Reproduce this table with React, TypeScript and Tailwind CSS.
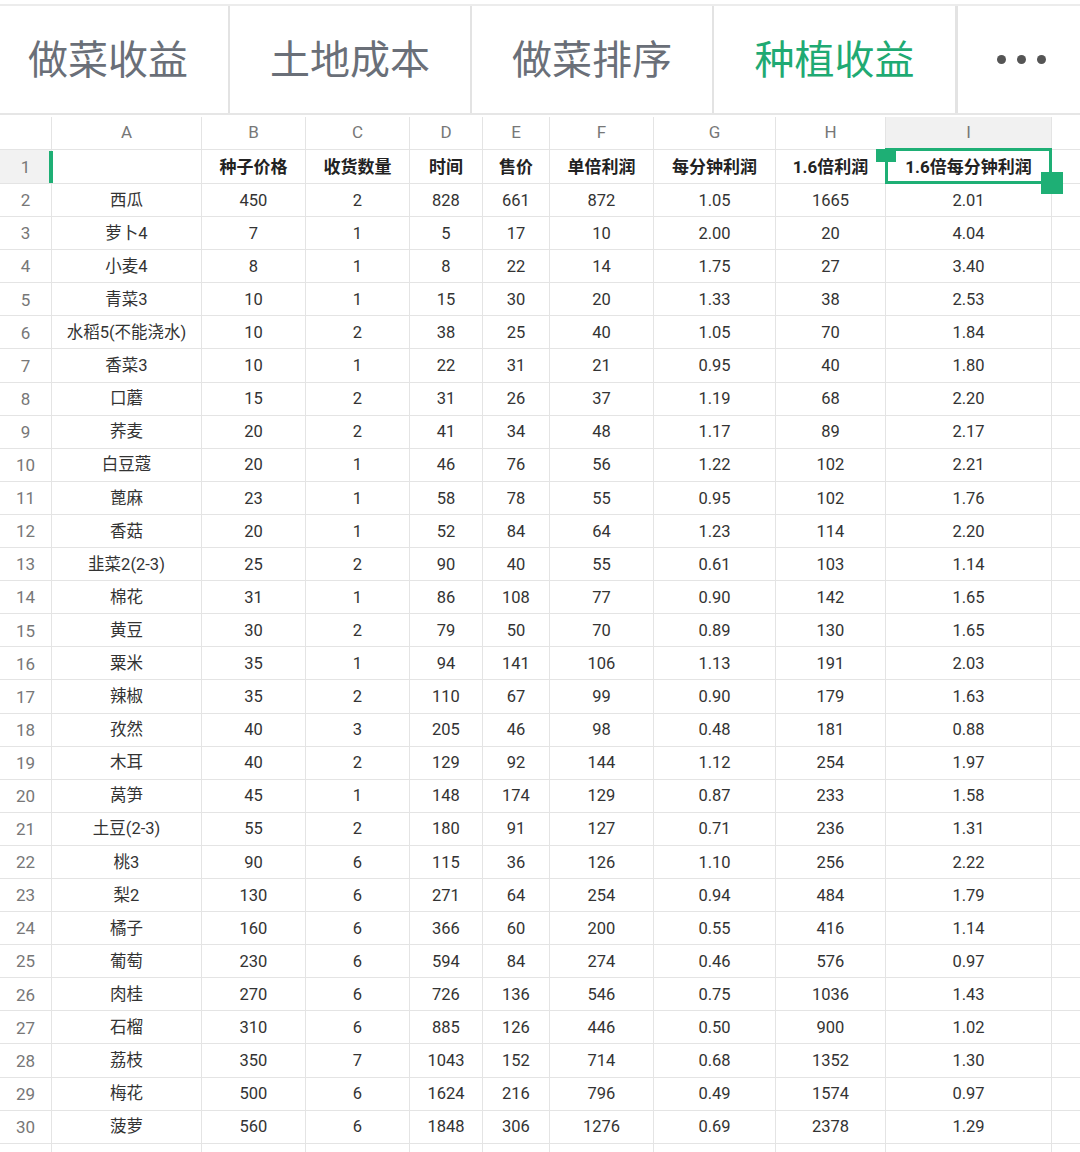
const tabs = ["做菜收益", "土地成本", "做菜排序", "种植收益"];

const columns = [
  { key: "A", width: "w-[150px]" },
  { key: "B", width: "w-[104px]" },
  { key: "C", width: "w-[104px]" },
  { key: "D", width: "w-[73px]" },
  { key: "E", width: "w-[67px]" },
  { key: "F", width: "w-[104px]" },
  { key: "G", width: "w-[122px]" },
  { key: "H", width: "w-[110px]" },
  { key: "I", width: "w-[166px]" },
];

const headers = ["", "种子价格", "收货数量", "时间", "售价", "单倍利润", "每分钟利润", "1.6倍利润", "1.6倍每分钟利润"];

const rows: string[][] = [
  ["西瓜", "450", "2", "828", "661", "872", "1.05", "1665", "2.01"],
  ["萝卜4", "7", "1", "5", "17", "10", "2.00", "20", "4.04"],
  ["小麦4", "8", "1", "8", "22", "14", "1.75", "27", "3.40"],
  ["青菜3", "10", "1", "15", "30", "20", "1.33", "38", "2.53"],
  ["水稻5(不能浇水)", "10", "2", "38", "25", "40", "1.05", "70", "1.84"],
  ["香菜3", "10", "1", "22", "31", "21", "0.95", "40", "1.80"],
  ["口蘑", "15", "2", "31", "26", "37", "1.19", "68", "2.20"],
  ["荞麦", "20", "2", "41", "34", "48", "1.17", "89", "2.17"],
  ["白豆蔻", "20", "1", "46", "76", "56", "1.22", "102", "2.21"],
  ["蓖麻", "23", "1", "58", "78", "55", "0.95", "102", "1.76"],
  ["香菇", "20", "1", "52", "84", "64", "1.23", "114", "2.20"],
  ["韭菜2(2-3)", "25", "2", "90", "40", "55", "0.61", "103", "1.14"],
  ["棉花", "31", "1", "86", "108", "77", "0.90", "142", "1.65"],
  ["黄豆", "30", "2", "79", "50", "70", "0.89", "130", "1.65"],
  ["粟米", "35", "1", "94", "141", "106", "1.13", "191", "2.03"],
  ["辣椒", "35", "2", "110", "67", "99", "0.90", "179", "1.63"],
  ["孜然", "40", "3", "205", "46", "98", "0.48", "181", "0.88"],
  ["木耳", "40", "2", "129", "92", "144", "1.12", "254", "1.97"],
  ["莴笋", "45", "1", "148", "174", "129", "0.87", "233", "1.58"],
  ["土豆(2-3)", "55", "2", "180", "91", "127", "0.71", "236", "1.31"],
  ["桃3", "90", "6", "115", "36", "126", "1.10", "256", "2.22"],
  ["梨2", "130", "6", "271", "64", "254", "0.94", "484", "1.79"],
  ["橘子", "160", "6", "366", "60", "200", "0.55", "416", "1.14"],
  ["葡萄", "230", "6", "594", "84", "274", "0.46", "576", "0.97"],
  ["肉桂", "270", "6", "726", "136", "546", "0.75", "1036", "1.43"],
  ["石榴", "310", "6", "885", "126", "446", "0.50", "900", "1.02"],
  ["荔枝", "350", "7", "1043", "152", "714", "0.68", "1352", "1.30"],
  ["梅花", "500", "6", "1624", "216", "796", "0.49", "1574", "0.97"],
  ["菠萝", "560", "6", "1848", "306", "1276", "0.69", "2378", "1.29"],
];

const green = "bg-[#1eaf75]";
const cellBase = "flex items-center justify-center shrink-0 border-r border-b border-[#e4e4e4]";

function TabBar() {
  return (
    <div className="flex h-[109px] border-b-2 border-[#e6e6e6]">
      {tabs.map((t, i) => (
        <div
          key={t}
          className={`flex items-center shrink-0 border-r-2 border-[#e3e3e3] text-[40px] leading-none pt-[2px] ${
            i === 0 ? "w-[230px] justify-end pr-[40px]" : i === 3 ? "w-[243px] justify-center" : "w-[242px] justify-center"
          } ${i === 3 ? "text-[#1faa73]" : "text-[#6a6f78]"}`}
        >
          {t}
        </div>
      ))}
      <div className="flex flex-1 items-center justify-center gap-[11px] border-l border-[#e3e3e3] pl-[4px]">
        <span className="w-[9px] h-[9px] rounded-full bg-[#555]" />
        <span className="w-[9px] h-[9px] rounded-full bg-[#555]" />
        <span className="w-[9px] h-[9px] rounded-full bg-[#555]" />
      </div>
    </div>
  );
}

function ColumnHeader() {
  return (
    <div className="flex h-[35px] text-[17px] text-[#777] pt-[2px]">
      <div className={`${cellBase} w-[52px]`} />
      {columns.map((c) => (
        <div key={c.key} className={`${cellBase} ${c.width} ${c.key === "I" ? "bg-[#f1f1f1]" : ""}`}>
          {c.key}
        </div>
      ))}
      <div className="flex-1 border-b border-[#e4e4e4]" />
    </div>
  );
}

function SelectedCell({ text }: { text: string }) {
  return (
    <div className={`${cellBase} ${columns[8].width} relative pt-[2px]`}>
      <span className="font-bold text-[#222]">{text}</span>
      <div className="absolute left-[-1px] top-[-2px] right-[-1px] bottom-[-1px] border-[3px] border-[#1eaf75] pointer-events-none" />
      <div className={`absolute left-[-10px] top-[-1px] w-[20px] h-[13px] ${green}`} />
      <div className={`absolute right-[-12px] bottom-[-11px] w-[22px] h-[22px] ${green}`} />
    </div>
  );
}

function HeaderRow() {
  return (
    <div className="flex h-[34px] text-[17px]">
      <div className={`${cellBase} w-[52px] bg-[#f2f2f2] text-[#777] relative pt-[2px]`}>
        1
        <div className={`absolute right-[-2px] top-[1px] bottom-[0px] w-[4px] ${green}`} />
      </div>
      {columns.slice(0, 8).map((c, i) => (
        <div key={c.key} className={`${cellBase} ${c.width} font-bold text-[#222] pt-[2px]`}>
          {headers[i]}
        </div>
      ))}
      <SelectedCell text={headers[8]} />
      <div className="flex-1 border-b border-[#e4e4e4]" />
    </div>
  );
}

function DataRow({ n, cells }: { n: number; cells: string[] }) {
  return (
    <div className="flex h-[33.1px] text-[16.5px]">
      <div className={`${cellBase} w-[52px] text-[#777] text-[17px] pt-[2px]`}>{n}</div>
      {columns.map((c, i) => (
        <div key={c.key} className={`${cellBase} ${c.width} text-[#333] pt-[2px]`}>
          {cells[i]}
        </div>
      ))}
      <div className="flex-1 border-b border-[#e4e4e4]" />
    </div>
  );
}

export default function App() {
  return (
    <div
      className="w-[1080px] h-[1152px] overflow-hidden bg-white"
      style={{ fontFamily: 'Roboto, "Noto Sans CJK SC", sans-serif' }}
    >
      <div className="h-[4px]" />
      <div className="h-[2px] bg-[#ececec]" />
      <TabBar />
      <ColumnHeader />
      <HeaderRow />
      {rows.map((r, i) => (
        <DataRow key={i} n={i + 2} cells={r} />
      ))}
      <DataRow n={31} cells={["", "", "", "", "", "", "", "", ""]} />
    </div>
  );
}
